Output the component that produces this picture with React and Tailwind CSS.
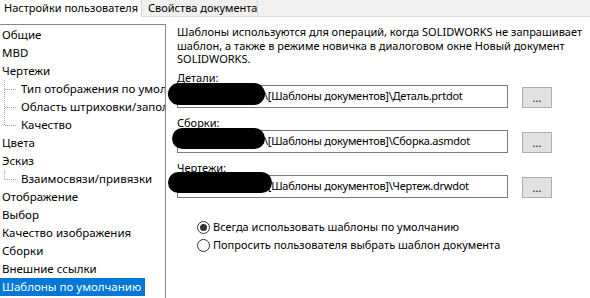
import React from "react";

const font = { fontFamily: '"Noto Sans", "Liberation Sans", sans-serif' };

const tree = [
  { label: "Общие" },
  { label: "MBD" },
  { label: "Чертежи" },
  { label: "Тип отображения по умолчанию", child: true },
  { label: "Область штриховки/заполнения", child: true },
  { label: "Качество", child: true, last: true },
  { label: "Цвета" },
  { label: "Эскиз" },
  { label: "Взаимосвязи/привязки", child: true, last: true },
  { label: "Отображение" },
  { label: "Выбор" },
  { label: "Качество изображения" },
  { label: "Сборки" },
  { label: "Внешние ссылки" },
  { label: "Шаблоны по умолчанию", selected: true },
];

// пунктирные линии дерева
const Connector = ({ last }) => (
  <svg width="19" height="18" className="shrink-0">
    <line x1="4.5" y1="0" x2="4.5" y2={last ? 9 : 18} stroke="#a0a0a0" strokeDasharray="1 1" />
    <line x1="5" y1="9.5" x2="17" y2="9.5" stroke="#a0a0a0" strokeDasharray="1 1" />
  </svg>
);

const PathField = ({ label, file }) => (
  <div className="flex flex-col">
    <div className="h-[14px] leading-[14px]">{label}</div>
    <div className="flex items-center gap-[14px]">
      <div className="w-[331px] h-[23px] border border-[#7a7a7a] bg-white flex items-center pl-[86px] whitespace-nowrap overflow-hidden tracking-[-0.25px]">
        \[Шаблоны документов]\{file}
      </div>
      <div className="w-[30px] h-[21px] mt-[2px] border border-[#adadad] bg-[#e1e1e1] flex items-center justify-center text-[11px] leading-none">
        ...
      </div>
    </div>
  </div>
);

const Radio = ({ checked, label }) => (
  <div className="flex items-center h-[18px] gap-[3px] whitespace-nowrap">
    <span className="w-[13px] h-[13px] rounded-full border border-[#333] bg-white flex items-center justify-center">
      {checked && <span className="w-[7px] h-[7px] rounded-full bg-[#333]" />}
    </span>
    <span>{label}</span>
  </div>
);

export default function App() {
  return (
    <div className="relative w-[590px] h-[298px] overflow-hidden bg-white text-[11px] text-black" style={font}>
      {/* вкладки */}
      <div className="flex h-[17px] bg-[#f0f0f0] border-b border-[#d9d9d9] whitespace-nowrap">
        <div className="w-[141px] h-[17px] bg-white pl-[4px] leading-[16px] text-[11px]">Настройки пользователя</div>
        <div className="w-[117px] border-x border-[#d9d9d9] pl-[6px] leading-[16px] text-[11px]">Свойства документа</div>
      </div>

      <div className="flex mt-[7px]">
        {/* дерево */}
        <div className="w-[166px] h-[280px] border-t border-r border-[#828790] pt-px shrink-0">
          {tree.map((item, i) => (
            <div key={i} className="flex items-center h-[18px] whitespace-nowrap overflow-hidden">
              {item.child && <Connector last={item.last} />}
              <span
                className={
                  item.selected
                    ? "bg-[#0078d7] text-white pl-[2px] pr-[4px] h-[18px] leading-[18px] text-[11.5px]"
                    : "pl-[2px] leading-[18px] text-[11.5px]"
                }
              >
                {item.label}
              </span>
            </div>
          ))}
        </div>

        {/* содержимое */}
        <div className="flex flex-col pl-[11px] pt-[1px]">
          <p className="leading-[13.5px] whitespace-nowrap">
            Шаблоны используются для операций, когда SOLIDWORKS не запрашивает
            <br />
            шаблон, а также в режиме новичка в диалоговом окне Новый документ
            <br />
            SOLIDWORKS.
          </p>
          <div className="flex flex-col gap-[8px] mt-[5px]">
            <PathField label="Детали:" file="Деталь.prtdot" />
            <PathField label="Сборки:" file="Сборка.asmdot" />
            <PathField label="Чертежи:" file="Чертеж.drwdot" />
          </div>
          <div className="flex flex-col ml-[20px] mt-[21px]">
            <Radio checked label="Всегда использовать шаблоны по умолчанию" />
            <Radio label="Попросить пользователя выбрать шаблон документа" />
          </div>
        </div>
      </div>

      {/* закрашенные пути */}
      <div className="absolute left-[168px] top-[83px] w-[97px] h-[22px] rounded-[11px] bg-black" />
      <div className="absolute left-[172px] top-[128px] w-[93px] h-[21px] rounded-[11px] bg-black" />
      <div className="absolute left-[168px] top-[172px] w-[104px] h-[21px] rounded-[11px] bg-black" />
    </div>
  );
}
